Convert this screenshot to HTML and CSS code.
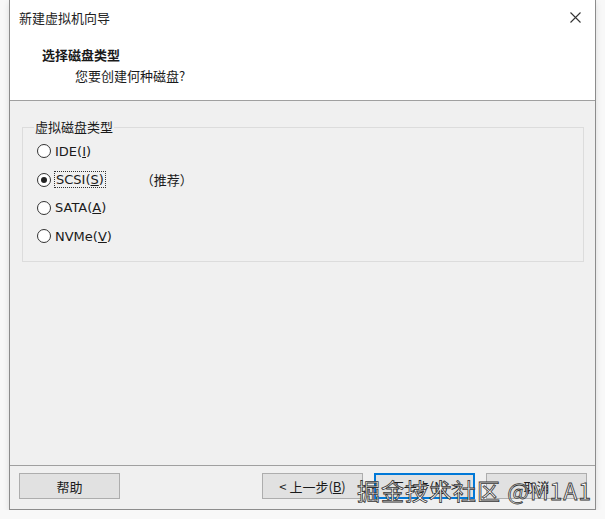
FILE: index.html
```html
<!DOCTYPE html>
<html lang="zh-CN">
<head>
  <meta charset="UTF-8" />
  <title>新建虚拟机向导</title>
  <link rel="stylesheet" href="styles.css">
</head>
<body>

<div class="dialog">
  <div class="titlebar">
    <span class="title">新建虚拟机向导</span>
    <svg class="close" width="11" height="11" viewBox="0 0 11 11">
      <path d="M0.5 0.5 L10.5 10.5 M10.5 0.5 L0.5 10.5" stroke="#333" stroke-width="1.1" fill="none"/>
    </svg>
  </div>

  <div class="header">
    <h1>选择磁盘类型</h1>
    <p>您要创建何种磁盘?</p>
  </div>

  <div class="content">
    <fieldset class="group">
      <legend>虚拟磁盘类型</legend>
      <label class="radio"><span class="dot"></span><span>IDE(<u>I</u>)</span></label>
      <label class="radio checked"><span class="dot"></span><span class="focus">SCSI(<u>S</u>)</span><span class="tip">（推荐）</span></label>
      <label class="radio"><span class="dot"></span><span>SATA(<u>A</u>)</span></label>
      <label class="radio"><span class="dot"></span><span>NVMe(<u>V</u>)</span></label>
    </fieldset>
  </div>

  <div class="footer">
    <button class="btn">帮助</button>
    <div class="spacer"></div>
    <button class="btn">&lt; 上一步(<u>B</u>)</button>
    <button class="btn default">下一步(<u>N</u>) &gt;</button>
    <button class="btn">取消</button>
  </div>
</div>

<div class="watermark">掘金技术社区 @M1A1</div>

</body>
</html>
```

FILE: styles.css
```css
body {
  margin: 0;
  background: #f8f8f8;
  font-family: "Noto Sans CJK SC", "Noto Sans", sans-serif;
  font-size: 13px;
  color: #1a1a1a;
}
.dialog {
  margin-left: 9px;
  width: 585px;
  height: 509px;
  border: 1px solid #8c8c8c;
  border-top: none;
  background: #f0f0f0;
  box-shadow: 0 2px 6px rgba(0,0,0,0.12);
  display: flex;
  flex-direction: column;
}
.titlebar {
  height: 35px;
  background: #fff;
  display: flex;
  align-items: center;
  justify-content: space-between;
  padding: 0 14px 0 9px;
}
.title {
  font-size: 13px;
  color: #222;
}
.header {
  height: 66px;
  background: #fff;
  border-bottom: 1px solid #a0a0a0;
  padding-left: 32px;
  box-sizing: border-box;
}
.header h1 {
  margin: 10px 0 0;
  font-size: 13px;
  font-weight: bold;
  line-height: 20px;
}
.header p {
  margin: 1px 0 0 33px;
  line-height: 20px;
}
.content {
  flex-grow: 1;
  padding: 17px 11px 0 12px;
}
.group {
  margin: 0;
  border: 1px solid #dcdcdc;
  padding: 1px 0 10px 14px;
  height: 144px;
  box-sizing: border-box;
}
.group legend {
  padding: 0 1px;
  margin-left: -3px;
  line-height: 18px;
}
.radio {
  display: flex;
  align-items: center;
  height: 28.4px;
  font-family: "DejaVu Sans", "Noto Sans CJK SC", sans-serif;
  font-size: 13px;
}
.dot {
  width: 12px;
  height: 12px;
  border: 1px solid #333;
  border-radius: 50%;
  background: #fff;
  margin-right: 4px;
  display: flex;
  align-items: center;
  justify-content: center;
}
.checked .dot::after {
  content: "";
  width: 6px;
  height: 6px;
  border-radius: 50%;
  background: #222;
}
.focus {
  outline: 1px dotted #333;
  padding: 0 1px;
}
.tip {
  margin-left: 36px;
  font-family: "Noto Sans CJK SC", sans-serif;
}
.footer {
  height: 44px;
  box-sizing: border-box;
  border-top: 1px solid #a0a0a0;
  display: flex;
  align-items: flex-start;
  padding: 7px 8px 0 9px;
  gap: 11px;
}
.spacer {
  flex-grow: 1;
}
.btn {
  width: 101px;
  height: 26px;
  background: #e1e1e1;
  border: 1px solid #adadad;
  font-family: "Noto Sans CJK SC", sans-serif;
  font-size: 13px;
  color: #1a1a1a;
  padding: 0;
}
.btn.default {
  border: 2px solid #0078d7;
}
.watermark {
  position: absolute;
  left: 357px;
  top: 473px;
  font-family: "Noto Sans CJK SC", sans-serif;
  font-size: 23px;
  color: #fff;
  -webkit-text-stroke: 0.8px #333;
  letter-spacing: 1px;
}
```
